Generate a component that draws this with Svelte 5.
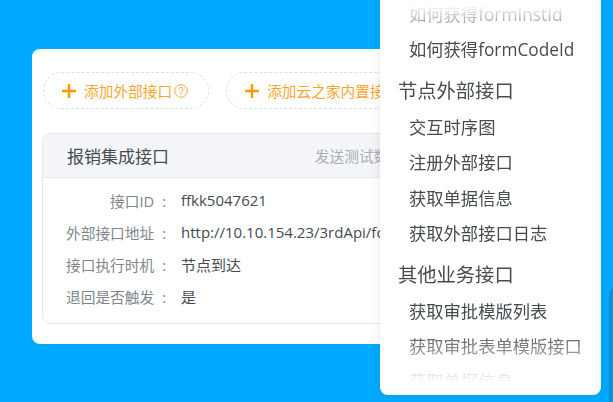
<script>
    const fields = [
        {label: "接口ID", value: "ffkk5047621"},
        {label: "外部接口地址", value: "http://10.10.154.23/3rdApi/form"},
        {label: "接口执行时机", value: "节点到达"},
        {label: "退回是否触发", value: "是"}
    ];

    const menu = [
        {title: null, items: ["如何获得formInstId", "如何获得formCodeId"]},
        {title: "节点外部接口", items: ["交互时序图", "注册外部接口", "获取单据信息", "获取外部接口日志"]},
        {title: "其他业务接口", items: ["获取审批模版列表", "获取审批表单模版接口", "获取单据信息"]}
    ];
</script>

<div class="page">
    <div class="card">
        <div class="add-row">
            <button class="add-btn">
                <svg class="plus" viewBox="0 0 14 14"><path d="M7 0v14M0 7h14" /></svg>
                <span>添加外部接口</span>
                <svg class="help" viewBox="0 0 14 14">
                    <circle cx="7" cy="7" r="6.3" />
                    <path d="M5 5.4a2 2 0 1 1 3.2 1.6c-.8.6-1.2 1-1.2 1.9" />
                    <path d="M7 10.2v1" />
                </svg>
            </button>
            <button class="add-btn">
                <svg class="plus" viewBox="0 0 14 14"><path d="M7 0v14M0 7h14" /></svg>
                <span>添加云之家内置接口</span>
            </button>
        </div>

        <div class="panel">
            <div class="panel-head">
                <span class="panel-title">报销集成接口</span>
                <span class="panel-action">发送测试数据</span>
            </div>
            <div class="panel-body">
                {#each fields as field}
                    <div class="field">
                        <span class="field-label">{field.label}<i class="colon">:</i></span>
                        <span class="field-value">{field.value}</span>
                    </div>
                {/each}
            </div>
        </div>
    </div>

    <div class="side-sheet"></div>

    <div class="popup">
        <div class="popup-list">
            {#each menu as group}
                {#if group.title}
                    <div class="group-title">{group.title}</div>
                {/if}
                {#each group.items as item}
                    <div class="menu-item">{item}</div>
                {/each}
            {/each}
        </div>
    </div>
</div>

<style>
    :global(body) {
        margin: 0;
        background: #00aaff;
    }

    .page {
        position: relative;
        width: 613px;
        height: 402px;
        overflow: hidden;
        padding: 49px 0 0 32px;
        box-sizing: border-box;
        font-family: "Open Sans", "Noto Sans CJK SC", sans-serif;
    }

    .card {
        width: 405px;
        height: 295px;
        background: #fff;
        border-radius: 8px;
        padding: 23px 10px 0;
        box-sizing: border-box;
    }

    .add-row {
        display: flex;
        gap: 17px;
        margin-left: 1px;
    }

    .add-btn {
        display: flex;
        align-items: center;
        flex: none;
        height: 37px;
        padding: 0 20px 0 18px;
        border: 1px dashed #d5e2ee;
        border-radius: 19px;
        background: #fff;
        color: #ffa42b;
        font: inherit;
        font-size: 14.7px;
        white-space: nowrap;
    }

    .plus {
        width: 14px;
        height: 14px;
        margin-right: 8px;
        fill: none;
        stroke: #ff9800;
        stroke-width: 2.4;
    }

    .help {
        width: 14px;
        height: 14px;
        margin-left: 2px;
        fill: none;
        stroke: #ffa42b;
        stroke-width: 1;
    }

    .panel {
        margin-top: 24px;
        height: 189px;
        border: 1px solid #e2e8f0;
        border-radius: 8px;
        overflow: hidden;
    }

    .panel-head {
        display: flex;
        justify-content: space-between;
        align-items: center;
        height: 43px;
        padding: 0 23px 0 24px;
        background: #f3f5f9;
        border-bottom: 1px solid #e2e8f0;
    }

    .panel-title {
        font-size: 17px;
        color: #464c50;
    }

    .panel-action {
        font-size: 14.7px;
        color: #a9aeb3;
    }

    .panel-body {
        padding: 6px 0;
    }

    .field {
        display: flex;
        height: 32px;
        align-items: center;
        font-size: 14.7px;
    }

    .field-label {
        width: 138px;
        text-align: right;
        color: #80878c;
        flex: none;
    }

    .colon {
        font-style: normal;
        margin-left: 8px;
        margin-right: 15px;
    }

    .field-value {
        color: #464c50;
        font-size: 15px;
        white-space: nowrap;
    }

    .side-sheet {
        position: absolute;
        left: 609px;
        top: 288px;
        width: 20px;
        height: 120px;
        background: #0b90d2;
        border-radius: 6px 0 0 0;
    }

    .popup {
        position: absolute;
        left: 380px;
        top: -10px;
        width: 221px;
        height: 405px;
        background: #fff;
        border-radius: 8px;
        box-shadow: 0 0 10px rgba(0, 0, 0, 0.1);
        overflow: hidden;
    }

    .popup-list {
        height: 100%;
        padding: 7px 0 0 18px;
        box-sizing: border-box;
        overflow: hidden;
        -webkit-mask-image: linear-gradient(to bottom, transparent 15px, #000 50px, #000 calc(100% - 65px), transparent calc(100% - 12px));
        mask-image: linear-gradient(to bottom, transparent 15px, #000 50px, #000 calc(100% - 65px), transparent calc(100% - 12px));
    }

    .group-title {
        height: 39px;
        line-height: 39px;
        font-size: 19.3px;
        color: #464c50;
        margin-top: 3.5px;
    }

    .menu-item {
        height: 35.3px;
        line-height: 35.3px;
        padding-left: 11px;
        font-size: 17.3px;
        color: #464c50;
        white-space: nowrap;
    }
</style>
